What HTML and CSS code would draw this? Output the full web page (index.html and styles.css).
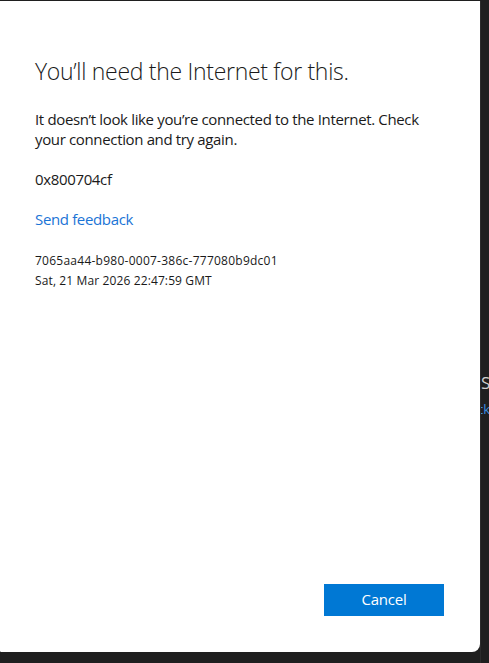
FILE: index.html
```
<!DOCTYPE html>
<html lang="en">
<head>
<meta charset="utf-8">
<title>You'll need the Internet for this.</title>
<link rel="stylesheet" href="styles.css">
</head>
<body>
<div class="page">
  <div class="dialog">
    <div class="content">
      <h1 class="title">You’ll need the Internet for this.</h1>
      <p class="message">It doesn’t look like you’re connected to the Internet. Check your connection and try again.</p>
      <p class="code">0x800704cf</p>
      <a class="link" href="#">Send feedback</a>
      <div class="meta">
        <div class="meta-id">7065aa44-b980-0007-386c-777080b9dc01</div>
        <div class="meta-date">Sat, 21 Mar 2026 22:47:59 GMT</div>
      </div>
    </div>
    <div class="footer">
      <button class="btn">Cancel</button>
    </div>
  </div>
  <div class="behind">
    <span class="behind-head">S</span>
    <span class="behind-link">ck</span>
  </div>
</div>
</body>
</html>
```
FILE: styles.css
```
html, body {
  margin: 0;
  padding: 0;
  background: #1f1f1f;
  overflow: hidden;
}
body {
  font-family: "Open Sans", "Noto Sans", sans-serif;
  color: #1a1a1a;
}
.page {
  display: flex;
  height: 663px;
  width: 489px;
  padding-top: 1px;
  box-sizing: border-box;
}
.dialog {
  flex: 0 0 485px;
  margin-left: -5px;
  height: 651px;
  background: #ffffff;
  border-radius: 0 0 8px 8px;
  display: flex;
  flex-direction: column;
  box-sizing: border-box;
}
.content {
  padding: 54px 36px 0 40px;
}
.title {
  margin: 0;
  font-size: 23px;
  font-weight: 300;
  line-height: 32px;
  letter-spacing: -0.3px;
  color: #1a1a1a;
}
.message {
  margin: 22px 0 0;
  font-size: 15px;
  line-height: 20px;
  letter-spacing: -0.35px;
}
.code {
  margin: 20px 0 0;
  font-size: 15px;
  line-height: 20px;
  letter-spacing: -0.35px;
}
.link {
  display: block;
  margin-top: 20px;
  font-size: 15px;
  line-height: 20px;
  letter-spacing: -0.35px;
  color: #1a74d6;
  text-decoration: none;
}
.meta {
  margin-top: 22px;
  font-size: 12px;
  line-height: 20px;
}
.meta-id {
  letter-spacing: 0.25px;
}
.meta-date {
  letter-spacing: 0.12px;
}
.footer {
  margin-top: auto;
  display: flex;
  justify-content: flex-end;
  padding: 0 36px 36px 0;
}
.btn {
  width: 120px;
  height: 32px;
  border: none;
  border-radius: 0;
  background: #0078d4;
  color: #ffffff;
  font-family: inherit;
  font-size: 15px;
  line-height: 30px;
  letter-spacing: -0.2px;
  padding: 0 0 2px;
}
.behind {
  flex: 1;
  border-left: 1px solid #2c2c2c;
  display: flex;
  flex-direction: column;
  padding-top: 370px;
  overflow: hidden;
}
.behind-head {
  font-size: 17px;
  line-height: 24px;
  color: #d0d0d0;
}
.behind-link {
  margin-top: 6px;
  margin-left: -4px;
  font-size: 13px;
  line-height: 16px;
  color: #3b8ee0;
}
```
